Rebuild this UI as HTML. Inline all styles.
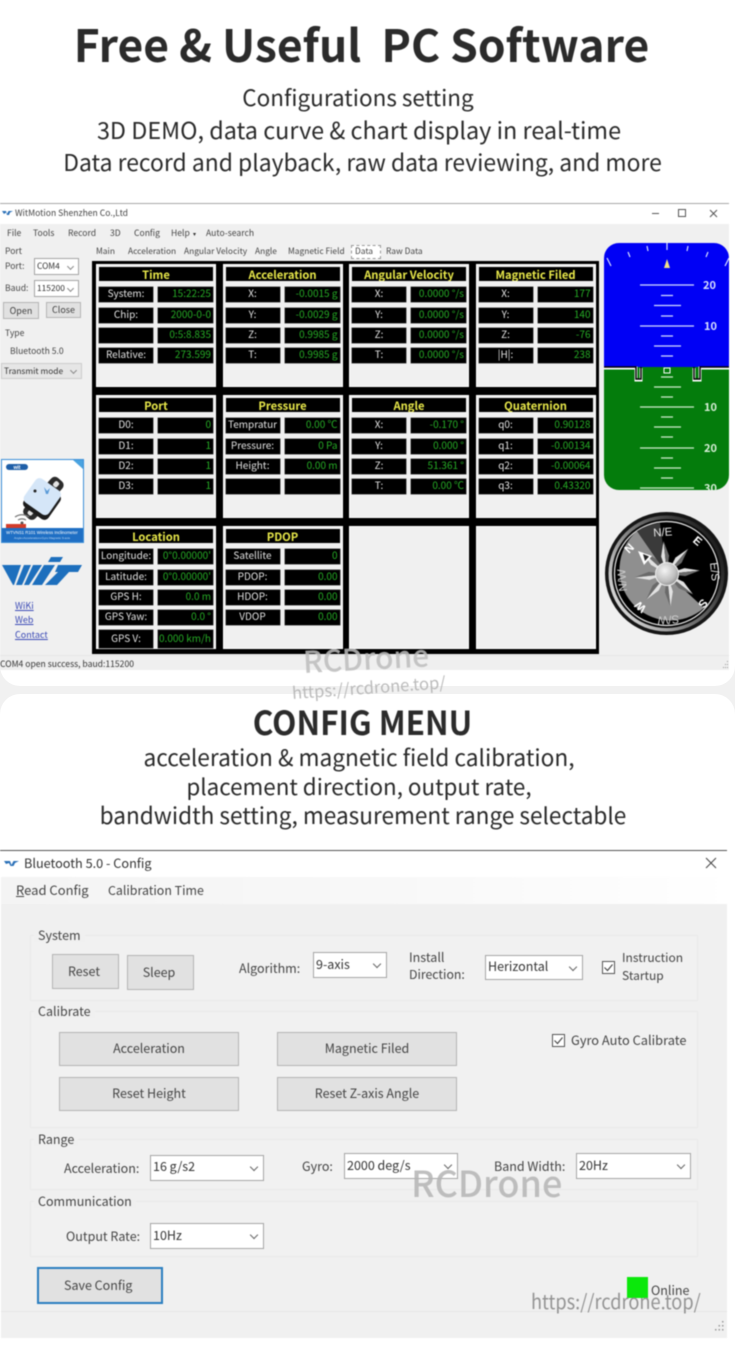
<!DOCTYPE html>
<html><head><meta charset="utf-8"><title>PC Software</title>
<style>
*{box-sizing:border-box}
html,body{margin:0;padding:0}
body{width:735px;height:1345px;position:relative;overflow:hidden;background:#f1f1f1;font-family:"Noto Sans CJK SC","Liberation Sans",sans-serif;color:#333}
.a,.t{position:absolute}
.t{white-space:nowrap;line-height:1}
.c{left:0;width:722px;text-align:center;color:#2a2a2a}
.w{font-size:8.600px;color:#444}
.s{position:absolute;background:#fff;border:1px solid #a5a5a5;color:#333;white-space:nowrap;line-height:1}
.s:after{content:"";position:absolute;right:6px;top:50%;width:5px;height:5px;margin-top:-4px;border-right:1px solid #666;border-bottom:1px solid #666;transform:rotate(45deg)}
.sm{font-size:8.400px;padding:3px 0 0 2px}
.sm:after{right:5px;width:4px;height:4px;margin-top:-3px;border-color:#888}
.b{position:absolute;background:#e1e1e1;border:1px solid #b4b4b4;text-align:center;color:#444}
.g{position:absolute;border:1px solid #e9e9e9;background:#f1f1f1}
.p{position:absolute;width:120px;height:123px;background:#f0f0f0;box-shadow:inset 0 0 0 1px #fff;padding:3px;display:grid;grid-template-columns:54px 55px;column-gap:5px;row-gap:5.3px;grid-auto-rows:15px;align-content:start;font-size:10px;line-height:12.500px}
.p h3{grid-column:span 2;margin:0;height:14px;background:#000;color:#e8e84a;font-size:11.200px;line-height:16px;text-align:center;font-weight:700;overflow:hidden}
.p i{font-style:normal;background:#000;color:#e4e4e4;text-align:center;overflow:hidden;white-space:nowrap;box-shadow:0 0 0 .5px #555}
.p u{text-decoration:none;background:#000;color:#26ad26;text-align:right;padding-right:2px;overflow:hidden;white-space:nowrap;box-shadow:0 0 0 .5px #555}
.soft{position:absolute;left:0;top:0;width:735px;height:1345px;filter:blur(.4px)}
.m{color:#bdbdbd;opacity:.85}
.f{font-size:12.500px;color:#444}
</style></head><body>

<div class="a" style="left:0;top:0;width:735px;height:686px;background:#fff;border-radius:0 0 20px 20px"></div>
<div class="a" style="left:0;top:694px;width:735px;height:651px;background:#fff;border-radius:20px 20px 0 0"></div>

<div class="soft">
<div class="t c" style="top:21px;left:0;width:723px;font-size:44.400px;font-weight:700;color:#2b2b2b;white-space:pre">Free &amp; Useful  PC Software</div>
<div class="t c" style="top:86px;left:-3px;font-size:22.500px">Configurations setting</div>
<div class="t c" style="top:118px;left:-2px;font-size:23.400px">3D DEMO, data curve &amp; chart display in real-time</div>
<div class="t c" style="top:150px;left:1.500px;font-size:22.900px">Data record and playback, raw data reviewing, and more</div>

<!-- main window -->
<div class="a" style="left:0;top:203px;width:729px;height:1px;background:#a8a8a8"></div>
<div class="a" style="left:0;top:224px;width:729px;height:446px;background:#f0f0f0"></div>
<div class="a" style="left:0;top:655px;width:729px;height:15px;background:#efefef;border-top:1px solid #e6e6e6"></div>

<svg class="a" style="left:2px;top:209px" width="11" height="7" viewBox="0 0 11 7"><path d="M0 2h4l1 3 1.500-3H11L8 3.500 7 6 5 6 4 3.500 2 5z" fill="#2a70b8"/></svg>
<div class="t w" style="left:15px;top:209px">WitMotion Shenzhen Co.,Ltd</div>
<div class="a" style="left:652px;top:213px;width:7px;height:1px;background:#555"></div>
<div class="a" style="left:678px;top:209px;width:8px;height:8px;border:1px solid #555"></div>
<svg class="a" style="left:709px;top:209px" width="9" height="9"><path d="M1 1l7 7M8 1l-7 7" stroke="#555" fill="none"/></svg>

<div class="t w" style="left:7px;top:229px">File</div>
<div class="t w" style="left:33px;top:229px">Tools</div>
<div class="t w" style="left:68px;top:229px">Record</div>
<div class="t w" style="left:110px;top:229px">3D</div>
<div class="t w" style="left:134px;top:229px">Config</div>
<div class="t w" style="left:171px;top:229px">Help</div>
<div class="t" style="left:193px;top:231px;font-size:6px">▾</div>
<div class="t w" style="left:206px;top:229px">Auto-search</div>

<div class="t w" style="left:5px;top:247px">Port</div>
<div class="t w" style="left:5px;top:262px">Port:</div>
<div class="s sm" style="left:34px;top:258px;width:45px;height:17px">COM4</div>
<div class="t w" style="left:5px;top:284px">Baud:</div>
<div class="s sm" style="left:34px;top:280px;width:45px;height:17px">115200</div>
<div class="b" style="left:3px;top:302px;width:36px;height:17px;font-size:9px;line-height:15px">Open</div>
<div class="b" style="left:46px;top:302px;width:35px;height:16px;font-size:9px;line-height:14px">Close</div>
<div class="t w" style="left:5px;top:329px">Type</div>
<div class="t w" style="left:10px;top:347px">Bluetooth 5.0</div>
<div class="s sm" style="left:1px;top:363px;width:81px;height:16px;background:#e6e6e6;border-color:#ccc">Transmit mode</div>

<!-- product card -->
<svg class="a" style="left:1px;top:459px" width="83" height="84" viewBox="0 0 83 84">
<rect x=".5" y=".5" width="82" height="83" fill="#fff" stroke="#3c8fd8"/>
<rect x="1" y="69" width="81" height="14" fill="#1f6fc4"/>
<path d="M72 1h10v9z" fill="#4aa3e0"/>
<rect x="5" y="5" width="22" height="6" rx="3" fill="#1f5fa8"/>
<text x="16" y="10" font-size="5" fill="#fff" text-anchor="middle" font-family="Liberation Sans" font-weight="700">wit</text>
<g transform="rotate(-48 42 39)">
<rect x="17" y="32" width="50" height="15" rx="5" fill="#2b2b2b"/>
<rect x="20" y="37" width="6" height="5" rx="2" fill="#e4e4e4"/><rect x="58" y="37" width="6" height="5" rx="2" fill="#e4e4e4"/>
</g>
<rect x="26" y="27" width="30" height="30" rx="5" fill="#1c1c1c" transform="rotate(35 41 42)"/>
<rect x="26" y="23" width="30" height="29" rx="5" fill="#d5e6f8" transform="rotate(35 41 38)"/>
<circle cx="34" cy="32" r="1.500" fill="#222"/>
<path d="M43 28l3 4 3-3-2 6-2 0z" fill="#5b9bd8"/>
<path d="M14 58a12 12 0 0 1 14 0M17 61a8 8 0 0 1 8 0" stroke="#777" fill="none" stroke-width="1.200"/>
<circle cx="21" cy="64" r="1.500" fill="#555"/>
<rect x="5" y="65" width="20" height="4" fill="#d23c2a"/>
<text x="41" y="75" font-size="4.300" fill="#fff" text-anchor="middle" font-family="Liberation Sans">WTVNS1 R101 Wireless Inclinometer</text>
<text x="41" y="80" font-size="3" fill="#bcd8f5" text-anchor="middle" font-family="Liberation Sans">Angle+Acceleration+Gyro Magnetic 9-axis</text>
</svg>

<!-- WIT logo -->
<svg class="a" style="left:2px;top:556px" width="81" height="32" viewBox="0 0 81 32">
<path d="M0 9H19L12 29H11ZM22 9H29L20 29H14ZM31 9H40L27 29H22ZM42 9H53L40 29H30ZM49 1H61L58 6H46ZM56 9H80L76 16H67L55 29H43L56 16H53Z" fill="#1d6fbd"/>
</svg>
<div class="t" style="left:15px;top:601px;font-size:9px;color:#3a49b5;text-decoration:underline">WiKi</div>
<div class="t" style="left:15px;top:615px;font-size:9px;color:#3a49b5;text-decoration:underline">Web</div>
<div class="t" style="left:15px;top:630px;font-size:9px;color:#3a49b5;text-decoration:underline">Contact</div>

<!-- tabs -->
<div class="t w" style="left:96px;top:247px;font-size:8.400px">Main</div>
<div class="t w" style="left:128px;top:247px;font-size:8.400px">Acceleration</div>
<div class="t w" style="left:184px;top:247px;font-size:8.400px">Angular Velocity</div>
<div class="t w" style="left:255px;top:247px;font-size:8.400px">Angle</div>
<div class="t w" style="left:288px;top:247px;font-size:8.400px">Magnetic Field</div>
<div class="t w" style="left:351px;top:245px;width:30px;height:14px;background:#fff;border:1px dashed #999;padding:1px 0 0 3px;font-size:8.400px">Data</div>
<div class="t w" style="left:386px;top:247px;font-size:8.400px">Raw Data</div>

<!-- data panel -->
<div class="a" style="left:92px;top:261px;width:507px;height:393px;background:#000"></div>

<div class="p" style="left:96px;top:264px"><h3>Time</h3><i>System:</i><u>15:22:25</u><i>Chip:</i><u>2000-0-0</u><i>&nbsp;</i><u>0:5:8.835</u><i>Relative:</i><u>273.599</u></div>
<div class="p" style="left:222.500px;top:264px"><h3>Acceleration</h3><i>X:</i><u>-0.0015 g</u><i>Y:</i><u>-0.0029 g</u><i>Z:</i><u>0.9985 g</u><i>T:</i><u>0.9985 g</u></div>
<div class="p" style="left:349px;top:264px"><h3>Angular Velocity</h3><i>X:</i><u>0.0000 °/s</u><i>Y:</i><u>0.0000 °/s</u><i>Z:</i><u>0.0000 °/s</u><i>T:</i><u>0.0000 °/s</u></div>
<div class="p" style="left:475.500px;top:264px"><h3>Magnetic Filed</h3><i>X:</i><u>177</u><i>Y:</i><u>140</u><i>Z:</i><u>-76</u><i>|H|:</i><u>238</u></div>

<div class="p" style="left:96px;top:395px"><h3>Port</h3><i>D0:</i><u>0</u><i>D1:</i><u>1</u><i>D2:</i><u>1</u><i>D3:</i><u>1</u></div>
<div class="p" style="left:222.500px;top:395px"><h3>Pressure</h3><i>Tempratur</i><u>0.00 ℃</u><i>Pressure:</i><u>0 Pa</u><i>Height:</i><u>0.00 m</u><i>&nbsp;</i><u>&nbsp;</u></div>
<div class="p" style="left:349px;top:395px"><h3>Angle</h3><i>X:</i><u>-0.170 °</u><i>Y:</i><u>0.000 °</u><i>Z:</i><u>51.361 °</u><i>T:</i><u>0.00 ℃</u></div>
<div class="p" style="left:475.500px;top:395px"><h3>Quaternion</h3><i>q0:</i><u>0.90128</u><i>q1:</i><u>-0.00134</u><i>q2:</i><u>-0.00064</u><i>q3:</i><u>0.43320</u></div>

<div class="p" style="left:96px;top:526px"><h3>Location</h3><i>Longitude:</i><u>0°0.00000'</u><i>Latitude:</i><u>0°0.00000'</u><i>GPS H:</i><u>0.0 m</u><i>GPS Yaw:</i><u>0.0 °</u><i style="height:18px;line-height:15px">GPS V:</i><u style="height:18px;line-height:15px">0.000 km/h</u></div>
<div class="p" style="left:222.500px;top:526px"><h3>PDOP</h3><i>Satellite</i><u>0</u><i>PDOP:</i><u>0.00</u><i>HDOP:</i><u>0.00</u><i>VDOP</i><u>0.00</u></div>
<div class="p" style="left:349px;top:526px"></div>
<div class="p" style="left:475.500px;top:526px"></div>

<!-- attitude instrument -->
<svg class="a" style="left:0;top:0" width="735" height="700" viewBox="0 0 735 700" font-family="Noto Sans CJK SC,Liberation Sans,sans-serif">
<defs>
<clipPath id="ins"><rect x="604" y="243" width="125" height="247" rx="15"/></clipPath>
<radialGradient id="hub" cx=".4" cy=".35" r=".8"><stop offset="0" stop-color="#f4f4f4"/><stop offset=".6" stop-color="#bdbdbd"/><stop offset="1" stop-color="#777"/></radialGradient>
<linearGradient id="ring" x1="0" y1=".8" x2="1" y2=".2"><stop offset="0" stop-color="#e8e8e8"/><stop offset=".45" stop-color="#777"/><stop offset="1" stop-color="#111"/></linearGradient>
<g id="blade"><path d="M667 574L663 556L667 541Z" fill="#e2e2e2"/><path d="M667 574L671 556L667 541Z" fill="#6a6a6a"/></g>
</defs>
<g clip-path="url(#ins)">
<rect x="604" y="243" width="125" height="124" fill="#0000f5"/>
<rect x="604" y="367" width="125" height="123" fill="#047c0c"/>
<g stroke="#d8e0ff" stroke-width="1.200" fill="none">
<path d="M667 243v7M647 246l1 5M628 252l2 5M607 258l4 8M688 246l-1 5M708 252l-2 5M729 258l-4 8"/>
<path d="M640 285h54M661 295.500h12M654 305.500h27M661 316h12M640 326h54M661 336h12M654 346h27M661 356h12"/>
</g>
<path d="M667 259l3 9h-6z" fill="#f0e08a"/>
<g stroke="#cfeacd" stroke-width="1.200" fill="none">
<path d="M661 377h12M654 387h27M661 397h12M640 407h54M661 417h12M654 427h27M661 437h12M640 448h54M661 458h12M654 468h27M661 478h12M640 488h54"/>
</g>
<g font-size="11" font-weight="700">
<text x="703" y="289" fill="#d8e0ff">20</text><text x="704" y="330" fill="#d8e0ff">10</text>
<text x="704" y="411" fill="#d8efd8">10</text><text x="704" y="452" fill="#d8efd8">20</text><text x="704" y="492" fill="#d8efd8">30</text>
</g>
<path d="M604 368h32v12h5v-12M729 368h-29v12h-6v-12" fill="none" stroke="#fff" stroke-width="3"/>
<path d="M604 367h32v12h5v-12M729 367h-29v12h-6v-12" fill="none" stroke="#000" stroke-width="1.500"/>
<rect x="664" y="368" width="6" height="5" fill="none" stroke="#fff"/>
</g>

<!-- compass -->
<circle cx="666.500" cy="573.500" r="61.500" fill="#151515"/>
<circle cx="666.500" cy="573.500" r="58" fill="url(#ring)"/>
<circle cx="666.500" cy="573.500" r="54.500" fill="#0a0a0a"/>
<circle cx="666.500" cy="573.500" r="52" fill="#000" stroke="#e4e4e4" stroke-width="1.200"/>
<path d="M666.500 573.500L637 531A51 51 0 0 0 704 608Z" fill="#8f8f8f"/>
<path d="M666.500 573.500L637 531A51 51 0 0 1 660 523Z" fill="#3a3a3a"/>
<g>
<use href="#blade" transform="rotate(-6 667 574)"/><use href="#blade" transform="rotate(40 667 574)"/><use href="#blade" transform="rotate(84 667 574)"/><use href="#blade" transform="rotate(128 667 574)"/><use href="#blade" transform="rotate(174 667 574)"/><use href="#blade" transform="rotate(219 667 574)"/><use href="#blade" transform="rotate(264 667 574)"/><use href="#blade" transform="rotate(-48 667 574)"/>
</g>
<path d="M638 551L652 556L644 565Z" fill="#fff"/><path d="M643 554l6 2.500-4 4.500z" fill="#222"/>
<circle cx="667" cy="574" r="11.500" fill="url(#hub)" stroke="#eee"/>
<g fill="#e8e8e8" text-anchor="middle" font-family="Liberation Sans,sans-serif" font-size="11.500">
<text transform="translate(663 536) rotate(-4)">N/E</text>
<text transform="translate(695 544) rotate(40)" font-weight="700" fill="#fff">E</text>
<text transform="translate(711 572) rotate(84)">E/S</text>
<text transform="translate(700 601) rotate(130)" font-weight="700" fill="#fff">S</text>
<text transform="translate(668 616) rotate(176)" fill="#ccc">S/W</text>
<text transform="translate(643 604) rotate(-138)" font-weight="700" fill="#fff">W</text>
<text transform="translate(626 580) rotate(-95)" fill="#ccc">N/W</text>
<text transform="translate(632 551) rotate(-45)" font-weight="700" fill="#fff">N</text>
</g>
</svg>

<div class="t w" style="left:0;top:660px;color:#333">COM4 open success, baud:115200</div>
<svg class="a" style="left:721px;top:660px" width="8" height="9"><path d="M6 1h1v1H6zM4 4h1v1H4zM6 4h1v1H6zM2 7h1v1H2zM4 7h1v1H4zM6 7h1v1H6z" fill="#999"/></svg>

<!-- config heading -->
<div class="t c" style="top:705px;left:0;width:725px;font-size:33px;font-weight:700;color:#2b2b2b;transform:scaleX(.956)">CONFIG MENU</div>
<div class="t c" style="top:746px;left:-2px;font-size:22.700px">acceleration &amp; magnetic field calibration,</div>
<div class="t c" style="top:775px;left:-2px;font-size:22.400px">placement direction, output rate,</div>
<div class="t c" style="top:804px;left:2px;font-size:22.600px">bandwidth setting, measurement range selectable</div>

<!-- config window -->
<div class="a" style="left:0;top:850px;width:727px;height:1px;background:#555"></div>
<svg class="a" style="left:4px;top:860px" width="15" height="7" viewBox="0 0 15 7"><path d="M0 1h6l1.500 4 2-4H15l-4 2-1.500 3h-3L5 3 2 4z" fill="#2a70b8"/></svg>
<div class="t" style="left:24px;top:857px;font-size:12.700px;color:#333">Bluetooth 5.0 - Config</div>
<svg class="a" style="left:705px;top:857px" width="12" height="12"><path d="M1 1l10 10M11 1L1 11" stroke="#444" fill="none"/></svg>
<div class="a" style="left:1px;top:877px;width:726px;height:28px;background:linear-gradient(90deg,#f4f4f4,#f9f9f9 60%,#fff)"></div>
<div class="a" style="left:1px;top:904px;width:726px;height:434px;background:#f0f0f0"></div>
<div class="t" style="left:16px;top:883px;font-size:13px;color:#444"><span style="text-decoration:underline">R</span>ead Config</div>
<div class="t" style="left:108px;top:884px;font-size:12.400px;color:#444">Calibration Time</div>

<div class="g" style="left:30px;top:935px;width:668px;height:66px"></div>
<div class="g" style="left:30px;top:1011px;width:668px;height:117px"></div>
<div class="g" style="left:30px;top:1139px;width:668px;height:51px"></div>
<div class="g" style="left:30px;top:1201px;width:668px;height:56px"></div>

<div class="t f" style="left:34px;top:929px;padding:0 4px;background:#f0f0f0">System</div>
<div class="t f" style="left:34px;top:1005px;padding:0 4px;background:#f0f0f0">Calibrate</div>
<div class="t f" style="left:34px;top:1133px;padding:0 4px;background:#f0f0f0">Range</div>
<div class="t f" style="left:34px;top:1195px;padding:0 4px;background:#f0f0f0">Communication</div>

<div class="b f" style="left:52px;top:954px;width:67px;height:35px;line-height:31px;text-indent:-3px">Reset</div>
<div class="b f" style="left:127px;top:955px;width:67px;height:35px;line-height:31px;text-indent:-3px">Sleep</div>
<div class="t f" style="left:239px;top:962px">Algorithm:</div>
<div class="s" style="left:313px;top:952px;width:74px;height:26px;font-size:12.500px;padding:5px 0 0 2px">9-axis</div>
<div class="t f" style="left:409px;top:951px">Install</div>
<div class="t f" style="left:409px;top:968px;font-size:12.300px">Direction:</div>
<div class="s" style="left:485px;top:955px;width:98px;height:25px;font-size:12.500px;padding:4px 0 0 2px">Herizontal</div>
<div class="a" style="left:602px;top:961px;width:13px;height:13px;border:1px solid #555;background:#fff"></div>
<svg class="a" style="left:602px;top:961px" width="13" height="13"><path d="M2.500 6.500l3 3 5-6" fill="none" stroke="#444" stroke-width="1.100"/></svg>
<div class="t f" style="left:622px;top:952px;font-size:12px">Instruction</div>
<div class="t f" style="left:622px;top:970px;font-size:12px">Startup</div>

<div class="b f" style="left:59px;top:1032px;width:180px;height:34px;line-height:30px">Acceleration</div>
<div class="b f" style="left:277px;top:1032px;width:180px;height:34px;line-height:30px">Magnetic Filed</div>
<div class="b f" style="left:59px;top:1077px;width:180px;height:34px;line-height:30px">Reset Height</div>
<div class="b f" style="left:277px;top:1077px;width:180px;height:34px;line-height:30px">Reset Z-axis Angle</div>
<div class="a" style="left:552px;top:1034px;width:13px;height:13px;border:1px solid #555;background:#fff"></div>
<svg class="a" style="left:552px;top:1034px" width="13" height="13"><path d="M2.500 6.500l3 3 5-6" fill="none" stroke="#444" stroke-width="1.100"/></svg>
<div class="t f" style="left:571px;top:1034px;font-size:12.800px">Gyro Auto Calibrate</div>

<div class="t f" style="left:64px;top:1162px">Acceleration:</div>
<div class="s" style="left:150px;top:1155px;width:114px;height:26px;font-size:12.500px;padding:4px 0 0 2px">16 g/s2</div>
<div class="t f" style="left:302px;top:1160px">Gyro:</div>
<div class="s" style="left:344px;top:1153px;width:114px;height:26px;font-size:12.500px;padding:5px 0 0 2px">2000 deg/s</div>
<div class="t f" style="left:494px;top:1160px">Band Width:</div>
<div class="s" style="left:576px;top:1153px;width:115px;height:26px;font-size:12.500px;padding:5px 0 0 2px">20Hz</div>
<div class="t f" style="left:66px;top:1230px">Output Rate:</div>
<div class="s" style="left:150px;top:1223px;width:114px;height:26px;font-size:12.500px;padding:5px 0 0 2px">10Hz</div>

<div class="b f" style="left:37px;top:1267px;width:126px;height:37px;border:2px solid #2a7ec0;line-height:31px;text-align:left;padding-left:25px">Save Config</div>
<div class="a" style="left:627px;top:1277px;width:21px;height:21px;background:#0be80b"></div>
<div class="t f" style="left:651px;top:1284px">Online</div>
<div class="a" style="left:1px;top:1311px;width:726px;height:1px;background:#e6e6e6"></div>
<svg class="a" style="left:714px;top:1320px" width="12" height="12"><path d="M8 1h1.500v1.500H8zM4.500 5H6v1.500H4.500zM8 5h1.500v1.500H8zM1 9h1.500v1.500H1zM4.500 9H6v1.500H4.500zM8 9h1.500v1.500H8z" fill="#999"/></svg>

<!-- watermarks -->
<div class="t m" style="left:303px;top:645px;font-size:30px;font-weight:500;transform:rotate(-3deg);transform-origin:left center">RCDrone</div>
<div class="t m" style="left:292px;top:684px;font-size:16.500px;transform:rotate(-4deg);transform-origin:left center;color:#b0b0b0">https://rcdrone.top/</div>
<div class="t m" style="left:411px;top:1164px;font-size:36px;font-weight:500;color:#b5b5b5">RCDrone</div>
<div class="t m" style="left:531px;top:1291px;font-size:20px;color:#8a8a8a;opacity:.9;transform:scaleX(.91);transform-origin:left center">https://rcdrone.top/</div>
</div>
</body></html>
